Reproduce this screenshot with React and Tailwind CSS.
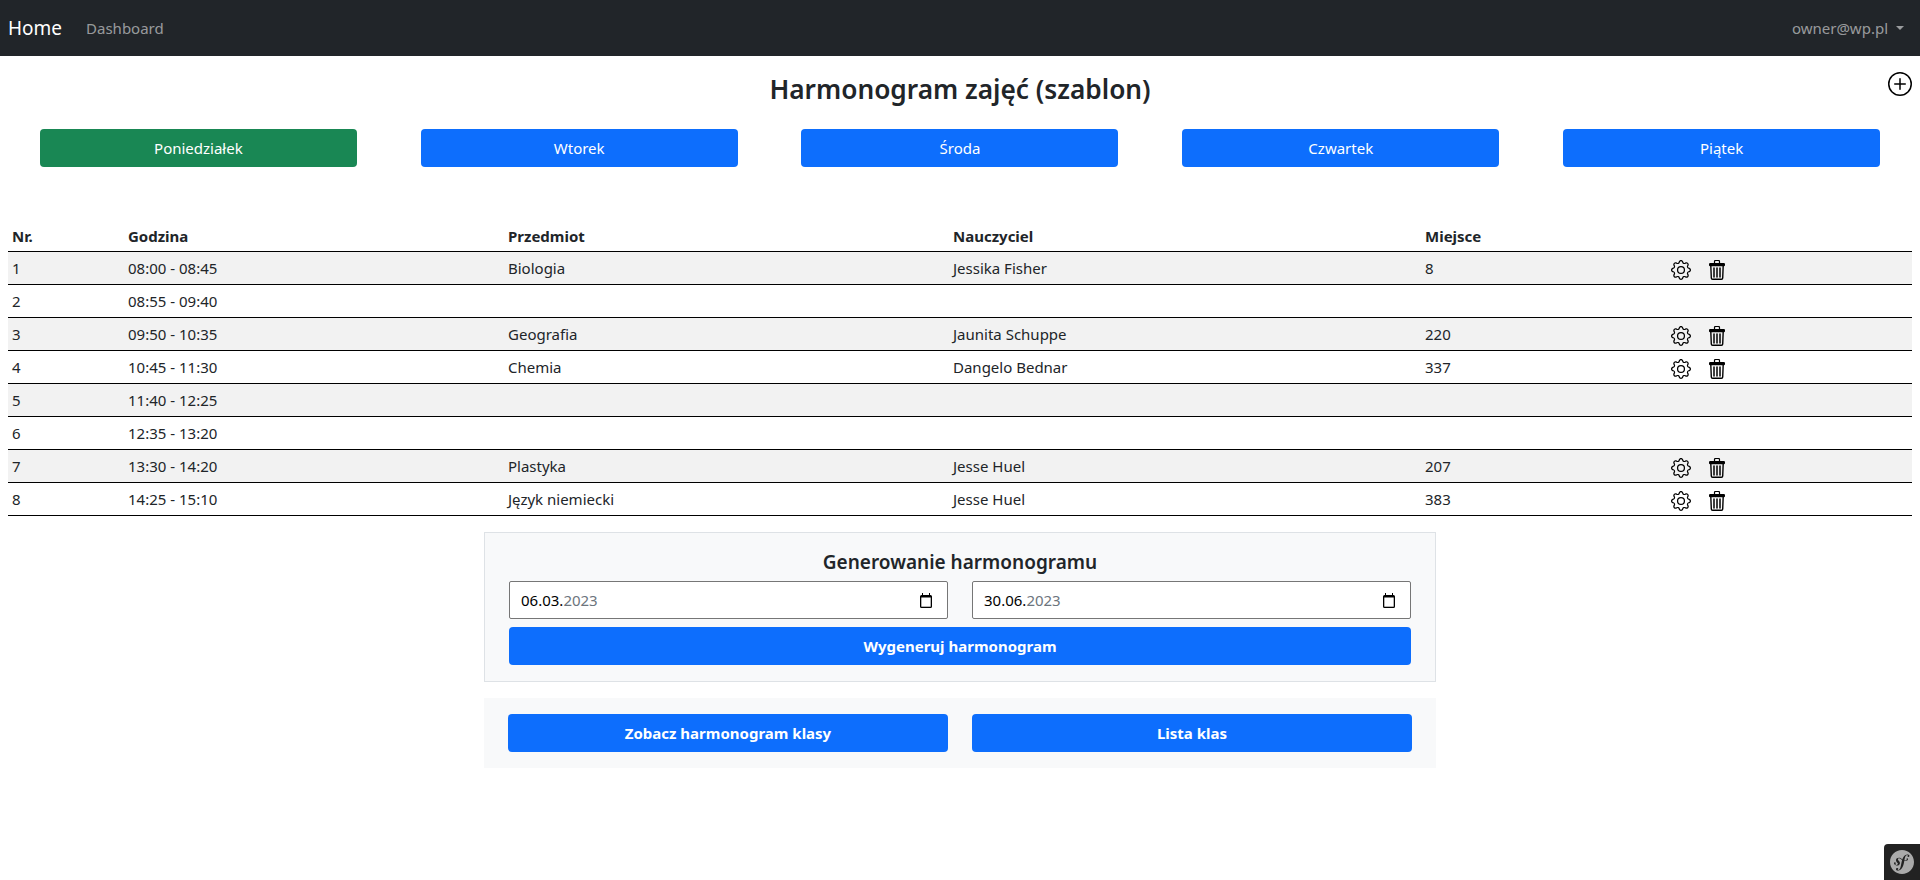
import React from 'react';
import { SiSymfony } from 'react-icons/si';

const days = ['Poniedziałek', 'Wtorek', 'Środa', 'Czwartek', 'Piątek'];

const rows = [
  { nr: 1, time: '08:00 - 08:45', subject: 'Biologia', teacher: 'Jessika Fisher', place: '8' },
  { nr: 2, time: '08:55 - 09:40' },
  { nr: 3, time: '09:50 - 10:35', subject: 'Geografia', teacher: 'Jaunita Schuppe', place: '220' },
  { nr: 4, time: '10:45 - 11:30', subject: 'Chemia', teacher: 'Dangelo Bednar', place: '337' },
  { nr: 5, time: '11:40 - 12:25' },
  { nr: 6, time: '12:35 - 13:20' },
  { nr: 7, time: '13:30 - 14:20', subject: 'Plastyka', teacher: 'Jesse Huel', place: '207' },
  { nr: 8, time: '14:25 - 15:10', subject: 'Język niemiecki', teacher: 'Jesse Huel', place: '383' },
];

const Gear = () => (
  <svg width="20" height="20" viewBox="0 0 16 16" fill="currentColor">
    <path d="M8 4.754a3.246 3.246 0 1 0 0 6.492 3.246 3.246 0 0 0 0-6.492zM5.754 8a2.246 2.246 0 1 1 4.492 0 2.246 2.246 0 0 1-4.492 0z" />
    <path d="M9.796 1.343c-.527-1.79-3.065-1.79-3.592 0l-.094.319a.873.873 0 0 1-1.255.52l-.292-.16c-1.64-.892-3.433.902-2.54 2.541l.159.292a.873.873 0 0 1-.52 1.255l-.319.094c-1.79.527-1.79 3.065 0 3.592l.319.094a.873.873 0 0 1 .52 1.255l-.16.292c-.892 1.64.901 3.434 2.541 2.54l.292-.159a.873.873 0 0 1 1.255.52l.094.319c.527 1.79 3.065 1.79 3.592 0l.094-.319a.873.873 0 0 1 1.255-.52l.292.16c1.64.893 3.434-.902 2.54-2.541l-.159-.292a.873.873 0 0 1 .52-1.255l.319-.094c1.79-.527 1.79-3.065 0-3.592l-.319-.094a.873.873 0 0 1-.52-1.255l.16-.292c.893-1.64-.902-3.433-2.541-2.54l-.292.159a.873.873 0 0 1-1.255-.52l-.094-.319zm-2.633.283c.246-.835 1.428-.835 1.674 0l.094.319a1.873 1.873 0 0 0 2.693 1.115l.291-.16c.764-.415 1.6.42 1.184 1.185l-.159.292a1.873 1.873 0 0 0 1.116 2.692l.318.094c.835.246.835 1.428 0 1.674l-.319.094a1.873 1.873 0 0 0-1.115 2.693l.16.291c.415.764-.42 1.6-1.185 1.184l-.291-.159a1.873 1.873 0 0 0-2.693 1.116l-.094.318c-.246.835-1.428.835-1.674 0l-.094-.319a1.873 1.873 0 0 0-2.692-1.115l-.292.16c-.764.415-1.6-.42-1.184-1.185l.159-.291A1.873 1.873 0 0 0 1.945 8.93l-.319-.094c-.835-.246-.835-1.428 0-1.674l.319-.094A1.873 1.873 0 0 0 3.06 4.377l-.16-.292c-.415-.764.42-1.6 1.185-1.184l.292.159a1.873 1.873 0 0 0 2.692-1.115l.094-.319z" />
  </svg>
);

const Trash = () => (
  <svg width="16" height="20" viewBox="0 0 16 20" fill="none" stroke="currentColor">
    <path d="M5.500 3.500V1.500a1 1 0 0 1 1-1h3a1 1 0 0 1 1 1v2" strokeWidth="1.200" />
    <rect x="0.600" y="3.600" width="14.800" height="2" rx="0.600" fill="currentColor" strokeWidth="1.200" />
    <path d="M1.800 5.500l.5 12.500a1.300 1.300 0 0 0 1.300 1.300h8.800a1.300 1.300 0 0 0 1.300-1.300l.5-12.500" strokeWidth="1.400" />
    <path d="M5 8v9M8 8v9M11 8v9" strokeWidth="1.500" strokeLinecap="round" />
  </svg>
);

const PlusCircle = () => (
  <svg width="24" height="24" viewBox="0 0 16 16" fill="currentColor">
    <path d="M8 15A7 7 0 1 1 8 1a7 7 0 0 1 0 14zm0 1A8 8 0 1 0 8 0a8 8 0 0 0 0 16z" />
    <path d="M8 4a.5.5 0 0 1 .5.5v3h3a.5.5 0 0 1 0 1h-3v3a.5.5 0 0 1-1 0v-3h-3a.5.5 0 0 1 0-1h3v-3A.5.5 0 0 1 8 4z" />
  </svg>
);

const CalendarIcon = () => (
  <svg width="12" height="15" viewBox="0 0 12 15">
    <path d="M2 0h1v2h6V0h1v2h.500A1.500 1.500 0 0 1 12 3.500v10a1.500 1.500 0 0 1-1.500 1.500h-9A1.500 1.500 0 0 1 0 13.500v-10A1.500 1.500 0 0 1 1.500 2H2V0z" fill="#000" />
    <rect x="1.300" y="4.500" width="9.400" height="9.200" fill="#fff" />
  </svg>
);

const DateField = ({ day, year }) => (
  <div className="flex h-[38px] flex-1 items-center justify-between rounded-[2px] border border-[#767676] bg-white pl-[11px] pr-[15px]">
    <span className="text-black">{day}<span className="text-[#6c757d]">{year}</span></span>
    <CalendarIcon />
  </div>
);

const App = () => {
  return (
    <div className="min-h-[880px] bg-white text-[15px] text-[#212529] [font-family:'Noto_Sans',sans-serif]">
      {/* Navbar */}
      <nav className="flex h-14 items-center justify-between bg-[#212529] pl-2 pr-4">
        <div className="flex items-center">
          <span className="mr-6 text-[19px] text-white">Home</span>
          <span className="text-[#ffffff8c]">Dashboard</span>
        </div>
        <div className="flex items-center text-[#ffffff8c]">
          owner@wp.pl
          <span className="ml-2 h-0 w-0 border-x-[4px] border-t-[4px] border-x-transparent border-t-[#ffffff8c]" />
        </div>
      </nav>

      <div className="relative pt-[18px] text-center">
        <h1 className="text-[26.250px] font-semibold leading-[31px]">Harmonogram zajęć (szablon)</h1>
        <div className="absolute right-[8px] top-[16px] text-black"><PlusCircle /></div>
      </div>

      {/* Day buttons */}
      <div className="mt-6 grid grid-cols-5 px-2">
        {days.map((day, i) => (
          <div key={day} className="flex justify-center">
            <button className={`h-[38px] w-[317px] rounded-[4px] text-white ${i === 0 ? 'bg-[#198754]' : 'bg-[#0d6efd]'}`}>
              {day}
            </button>
          </div>
        ))}
      </div>

      {/* Table */}
      <div className="mt-14 px-2">
        <div className="grid h-[29px] grid-cols-[116px_380px_445px_472px_1fr] items-center border-b border-black pb-[2px] pl-1 font-bold">
          <span>Nr.</span>
          <span>Godzina</span>
          <span>Przedmiot</span>
          <span>Nauczyciel</span>
          <span>Miejsce</span>
        </div>
        {rows.map((row) => (
          <div
            key={row.nr}
            className={`grid h-[33px] grid-cols-[116px_380px_445px_472px_246px_1fr] items-center border-b border-black pl-1 ${row.nr % 2 === 1 ? 'bg-[#f2f2f2]' : ''}`}
          >
            <span>{row.nr}</span>
            <span>{row.time}</span>
            <span>{row.subject}</span>
            <span>{row.teacher}</span>
            <span>{row.place}</span>
            {row.subject && (
              <div className="mt-1 flex items-center gap-[18px] text-black">
                <Gear />
                <Trash />
              </div>
            )}
          </div>
        ))}
      </div>

      {/* Generator */}
      <div className="mx-auto mt-4 w-[952px] border border-[#dee2e6] bg-[#f8f9fa] px-6 pb-4 pt-[17px]">
        <h2 className="text-center text-[19px] font-semibold leading-6">Generowanie harmonogramu</h2>
        <div className="mt-[7px] flex gap-6">
          <DateField day="06.03." year="2023" />
          <DateField day="30.06." year="2023" />
        </div>
        <button className="mt-2 h-[38px] w-full rounded-[4px] bg-[#0d6efd] font-bold text-white">Wygeneruj harmonogram</button>
      </div>

      <div className="mx-auto mt-4 flex w-[952px] gap-6 bg-[#f8f9fa] px-6 py-4">
        <button className="h-[38px] flex-1 rounded-[4px] bg-[#0d6efd] font-bold text-white">Zobacz harmonogram klasy</button>
        <button className="h-[38px] flex-1 rounded-[4px] bg-[#0d6efd] font-bold text-white">Lista klas</button>
      </div>

      {/* Symfony toolbar toggle */}
      <div className="fixed bottom-0 right-0 flex h-9 w-9 items-center justify-center rounded-tl-[4px] bg-[#222]">
        <SiSymfony className="h-6 w-6 text-[#aaa]" />
      </div>
    </div>
  );
};

export default App;
